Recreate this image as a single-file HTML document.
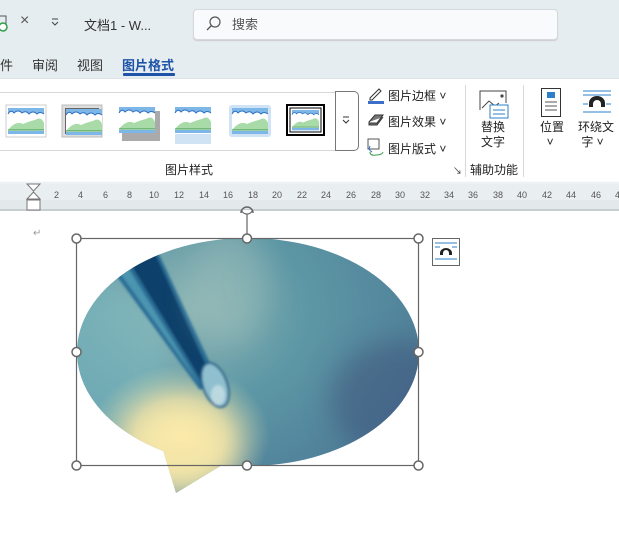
<!DOCTYPE html>
<html><head><meta charset="utf-8"><style>
*{margin:0;padding:0;box-sizing:border-box}
body{width:619px;height:543px;overflow:hidden;background:#fff;font-family:"Liberation Sans","Noto Sans CJK SC",sans-serif;position:relative;color:#222}
.a{position:absolute;white-space:nowrap}
.t{font-size:12px}
</style></head><body>
<div class="a" style="left:0;top:0;width:619px;height:79px;background:#e6edf1"></div>
<svg class="a" style="left:0;top:12px" width="12" height="22"><rect x="-6" y="4" width="12" height="12" fill="none" stroke="#555"/><circle cx="3" cy="15" r="4" fill="#fff" stroke="#2e9e4a" stroke-width="1.5"/></svg>
<div class="a" style="left:20px;top:12px;font-size:16px;color:#555">×</div>
<svg class="a" style="left:50px;top:17px" width="10" height="10"><path d="M2 2h6M2 5l3 3 3-3" fill="none" stroke="#444"/></svg>
<div class="a t" style="left:84px;top:15px;font-size:13px;color:#333">文档1 - W...</div>
<div class="a" style="left:193px;top:9px;width:365px;height:31px;background:#f9fafb;border:1px solid #d4d9dc;border-radius:4px;box-shadow:0 1px 1px #ccc"></div>
<svg class="a" style="left:205px;top:16px" width="16" height="16"><circle cx="10" cy="6" r="5" fill="none" stroke="#555" stroke-width="1.2"/><path d="M6.5 9.5L2 14" stroke="#555" stroke-width="1.3"/></svg>
<div class="a" style="left:232px;top:14px;font-size:13px;color:#555">搜索</div>
<div class="a" style="left:0;top:55px;font-size:13px;color:#333">件</div>
<div class="a" style="left:32px;top:55px;font-size:13px;color:#333">审阅</div>
<div class="a" style="left:77px;top:55px;font-size:13px;color:#333">视图</div>
<div class="a" style="left:122px;top:55px;font-size:13px;color:#1d54a8;font-weight:bold">图片格式</div>
<div class="a" style="left:123px;top:73px;width:52px;height:3px;background:#1d54a8;border-radius:1px"></div>
<div class="a" style="left:0;top:78px;width:619px;height:1px;background:#dde3e6"></div>
<div class="a" style="left:0;top:92px;width:338px;height:59px;border-top:1px solid #d8d8d8;border-bottom:1px solid #d8d8d8"></div>
<div class="a" style="left:335px;top:91px;width:24px;height:60px;border:1px solid #777;border-radius:0 5px 5px 0;background:#fff"></div>
<svg class="a" style="left:341px;top:115px" width="10" height="10"><path d="M2 2h6M2 5l3 3 3-3" fill="none" stroke="#333"/></svg>
<svg class="a" style="left:0;top:100px" width="335" height="45">
<defs><g id="th"><rect x="0" y="0" width="36" height="26" fill="#7db7e8"/><path d="M0 6 q3-5 6-1 q4-4 8 0 q4-3 7 1 q4-4 8 0 q3-3 7 0 V26H0Z" fill="#fff"/><path d="M0 6 q3-5 6-1 q4-4 8 0 q4-3 7 1 q4-4 8 0 q3-3 7 0" fill="none" stroke="#2d6fc0"/><path d="M0 22 q8-10 15-6 q7-3 12-4 q6-4 9 3V22Z" fill="#a8dba8"/><path d="M0 22h36" stroke="#3a9a4a"/><rect x="0" y="23" width="36" height="3" fill="#7db7e8"/></g></defs>
<rect x="6" y="5" width="40" height="32" fill="#fff" stroke="#ccc"/><use href="#th" x="8" y="8"/>
<rect x="62" y="5" width="40" height="32" fill="#ddd" stroke="#bbb"/><rect x="65" y="8" width="34" height="26" fill="#666"/><use href="#th" x="66" y="9"/>
<rect x="122" y="11" width="38" height="30" fill="#aaa"/><use href="#th" x="119" y="7"/>
<rect x="175" y="34" width="36" height="10" fill="#cfe3f5"/><use href="#th" x="175" y="7"/>
<rect x="229" y="5" width="42" height="32" fill="#cfe3f5" rx="3"/><use href="#th" x="232" y="8"/>
<rect x="287" y="5" width="37" height="30" fill="#fff" stroke="#000" stroke-width="2"/><rect x="290" y="8" width="31" height="24" fill="none" stroke="#000"/><use href="#th" x="0" y="0" transform="translate(292 10) scale(.75 .78)"/>
</svg>
<svg class="a" style="left:367px;top:86px" width="18" height="18"><path d="M3 12 L12 3 l2 2 -9 9 H3Z" fill="#fff" stroke="#333"/><rect x="1" y="15" width="16" height="3" fill="#3b6fc8"/></svg>
<div class="a t" style="left:388px;top:87px">图片边框 ˅</div>
<svg class="a" style="left:367px;top:112px" width="18" height="16"><path d="M2 10 L8 3 h8 l-6 8 H2Z M2 10 v3 h8 l6-8" fill="#777" stroke="#333"/></svg>
<div class="a t" style="left:388px;top:113px">图片效果 ˅</div>
<svg class="a" style="left:367px;top:138px" width="18" height="18"><rect x="1" y="1" width="11" height="10" fill="#fff" stroke="#555"/><path d="M3 14 q0 4 6 3 q6 0 7-3" fill="none" stroke="#3a9a4a"/><path d="M3 8 q-2 4 2 6" fill="none" stroke="#2d6fc0"/></svg>
<div class="a t" style="left:388px;top:140px">图片版式 ˅</div>
<div class="a" style="left:165px;top:161px;font-size:12px">图片样式</div>
<div class="a" style="left:453px;top:164px;font-size:9px">↘</div>
<div class="a" style="left:465px;top:85px;width:1px;height:92px;background:#d8d8d8"></div>
<svg class="a" style="left:479px;top:90px" width="32" height="30"><path d="M1 20V1h26v12" fill="none" stroke="#444"/><path d="M3 18 l7-7 6 5 4-3" fill="none" stroke="#444"/><circle cx="23" cy="6" r="1.6" fill="#444"/><rect x="11" y="15" width="18" height="13" fill="#fff" stroke="#2d7fc8"/><path d="M14 20h12M14 24h12" stroke="#2d7fc8"/></svg>
<div class="a t" style="left:481px;top:120px;line-height:15px">替换<br>文字</div>
<div class="a t" style="left:470px;top:161px">辅助功能</div>
<div class="a" style="left:523px;top:85px;width:1px;height:92px;background:#d8d8d8"></div>
<svg class="a" style="left:541px;top:88px" width="22" height="30"><rect x=".5" y=".5" width="19" height="28" fill="#fff" stroke="#333"/><rect x="6" y="4" width="8" height="6" fill="#2d7fc8"/><path d="M4 14h12M4 18h12M4 22h12" stroke="#555"/></svg>
<div class="a t" style="left:540px;top:120px;line-height:15px">位置<br>&nbsp;&nbsp;˅</div>
<svg class="a" style="left:582px;top:90px" width="30" height="24"><path d="M1 1h28M1 5h28M1 14h5M24 14h5M1 22h28" stroke="#2d7fc8"/><path d="M7 17 v-4 a8 7 0 0 1 16 0 v4 h-4 v-3 a4 4 0 0 0 -8 0 v3z" fill="#222"/></svg>
<div class="a t" style="left:578px;top:120px;line-height:15px">环绕文<br>&nbsp;字 ˅</div>
<div class="a" style="left:0;top:182px;width:619px;height:2px;background:#eef1f3;box-shadow:0 1px 2px #ccc"></div>
<div class="a" style="left:0;top:184px;width:619px;height:18px;background:#e9eef1"></div>
<div class="a" style="left:0;top:202px;width:619px;height:8px;background:#e3e8eb"></div>
<div class="a" style="left:0;top:210px;width:619px;height:1px;background:#c9ced1"></div>
<div class="a" style="left:0;top:190px;font-size:9px;color:#555">
<span class="a" style="left:54px">2</span><span class="a" style="left:78px">4</span><span class="a" style="left:103px">6</span><span class="a" style="left:127px">8</span><span class="a" style="left:149px">10</span><span class="a" style="left:174px">12</span><span class="a" style="left:199px">14</span><span class="a" style="left:223px">16</span><span class="a" style="left:248px">18</span><span class="a" style="left:272px">20</span><span class="a" style="left:297px">22</span><span class="a" style="left:321px">24</span><span class="a" style="left:346px">26</span><span class="a" style="left:371px">28</span><span class="a" style="left:395px">30</span><span class="a" style="left:420px">32</span><span class="a" style="left:444px">34</span><span class="a" style="left:468px">36</span><span class="a" style="left:493px">38</span><span class="a" style="left:517px">40</span><span class="a" style="left:542px">42</span><span class="a" style="left:566px">44</span><span class="a" style="left:591px">46</span><span class="a" style="left:615px">4</span></div>
<div class="a" style="left:33px;top:228px;font-size:10px;color:#999">↵</div>
<svg class="a" style="left:0;top:200px" width="619" height="343">
<defs>
<radialGradient id="g1" cx="0.3" cy="0.3" r="0.9"><stop offset="0" stop-color="#8fb7b5"/><stop offset="0.4" stop-color="#5d97a5"/><stop offset="0.8" stop-color="#4f7f99"/><stop offset="1" stop-color="#43567a"/></radialGradient>
<radialGradient id="g2" cx="0.5" cy="0.5" r="0.5"><stop offset="0" stop-color="#fbeeae"/><stop offset="0.5" stop-color="#e8dfa8" stop-opacity=".8"/><stop offset="1" stop-color="#c8d4b0" stop-opacity="0"/></radialGradient>
<filter id="b" x="-50%" y="-50%" width="200%" height="200%"><feGaussianBlur stdDeviation="14"/></filter>
<filter id="b2"><feGaussianBlur stdDeviation="1.2"/></filter>
<clipPath id="c"><path d="M77 152 a171 114 0 1 0 342 0 a171 114 0 1 0 -342 0Z M163 250 L176 293 L222 265Z"/></clipPath>
</defs>
<g clip-path="url(#c)">
<rect x="70" y="30" width="360" height="270" fill="url(#g1)"/>
<ellipse cx="100" cy="160" rx="70" ry="80" fill="#7fb9c0" opacity=".6" filter="url(#b)"/>
<ellipse cx="180" cy="235" rx="90" ry="70" fill="url(#g2)"/>
<ellipse cx="180" cy="250" rx="55" ry="45" fill="#fbe9a8" opacity=".8" filter="url(#b)"/>
<g filter="url(#b2)">
<path d="M105 60 L150 35 L218 180 L200 190Z" fill="#2a6d95"/>
<path d="M125 55 L150 42 L214 182 L205 187Z" fill="#0e3f6a"/>
<path d="M112 62 L122 58 L200 185Z" fill="#5aa6bd" opacity=".7"/>
<ellipse cx="215" cy="185" rx="12" ry="23" transform="rotate(-20 215 185)" fill="#8fc0cf" stroke="#1a5a85" stroke-width="2"/>
<ellipse cx="218" cy="195" rx="7" ry="10" fill="#c6dde3" opacity=".8"/>
</g>
<ellipse cx="230" cy="85" rx="40" ry="60" fill="#b8cfc4" opacity=".3" filter="url(#b)"/>
<ellipse cx="400" cy="200" rx="70" ry="60" fill="#3d4f78" opacity=".5" filter="url(#b)"/>
</g>
<g fill="none" stroke="#666" stroke-width="1.2">
<rect x="76.5" y="38.5" width="342" height="227"/>
<path d="M247 38V12"/>
<circle cx="247" cy="8" r="6" fill="#fff"/>
</g>
<g fill="#fff" stroke="#666" stroke-width="1.5">
<circle cx="76.5" cy="38.5" r="4.5"/><circle cx="247" cy="38.5" r="4.5"/><circle cx="418.5" cy="38.5" r="4.5"/>
<circle cx="76.5" cy="152" r="4.5"/><circle cx="418.5" cy="152" r="4.5"/>
<circle cx="76.5" cy="265.5" r="4.5"/><circle cx="247" cy="265.5" r="4.5"/><circle cx="418.5" cy="265.5" r="4.5"/>
</g>
<rect x="432.5" y="38.5" width="27" height="27" fill="#fff" stroke="#666"/>
<path d="M435 43h22M435 47h5M452 47h5M435 59h22" stroke="#2d7fc8"/>
<path d="M440 55v-2a6 5 0 0 1 12 0v2h-3v-2a3 3 0 0 0-6 0v2z" fill="#222"/>
</svg>
<div class="a" style="left:0;top:200px;width:619px;height:10px;background:#e3e8eb;border-bottom:1px solid #c9ced1"></div>
<svg class="a" style="left:26px;top:183px" width="16" height="28"><path d="M1 1h13l-6.5 7z M1 16l6.5-7 6.5 7z" fill="#fff" stroke="#777"/><rect x="1" y="17" width="13" height="10" fill="#fff" stroke="#777"/></svg>
<svg class="a" style="left:238px;top:205px" width="20" height="10"><path d="M3 8 a6 6 0 0 1 12 0" fill="none" stroke="#666" stroke-width="1.5"/></svg>
</body></html>
